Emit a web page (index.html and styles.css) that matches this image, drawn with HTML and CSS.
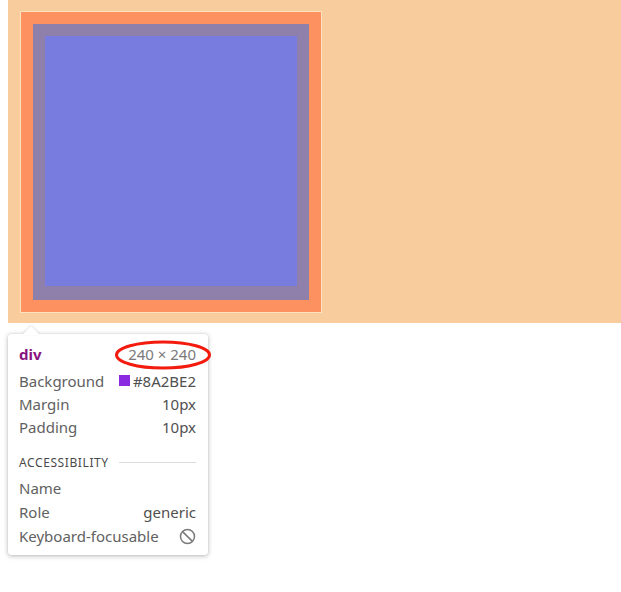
FILE: index.html
```html
<!DOCTYPE html>
<html>
<head>
<meta charset="utf-8">
<link rel="stylesheet" href="styles.css">
</head>
<body>
<div class="page">
  <div class="margin-box">
    <div class="padding-box">
      <div class="content-box"></div>
    </div>
  </div>
</div>

<div class="tooltip">
  <div class="arrow"></div>
  <div class="row head">
    <span class="tag">div</span>
    <span class="size">240 × 240</span>
  </div>
  <div class="row">
    <span class="label">Background</span>
    <span class="value"><i class="swatch"></i>#8A2BE2</span>
  </div>
  <div class="row">
    <span class="label">Margin</span>
    <span class="value">10px</span>
  </div>
  <div class="row">
    <span class="label">Padding</span>
    <span class="value">10px</span>
  </div>
  <div class="section">
    <span class="section-title">ACCESSIBILITY</span>
    <span class="section-line"></span>
  </div>
  <div class="row a11y">
    <span class="label">Name</span>
    <span class="value"></span>
  </div>
  <div class="row a11y">
    <span class="label">Role</span>
    <span class="value">generic</span>
  </div>
  <div class="row a11y">
    <span class="label">Keyboard-focusable</span>
    <span class="value">
      <svg class="no-icon" width="17" height="17" viewBox="0 0 17 17">
        <circle cx="8.5" cy="8.5" r="7" fill="none" stroke="#7a7a7a" stroke-width="1.5"/>
        <line x1="3.6" y1="3.6" x2="13.4" y2="13.4" stroke="#7a7a7a" stroke-width="1.5"/>
      </svg>
    </span>
  </div>
</div>

<svg class="annotation" width="100" height="32" viewBox="0 0 100 32">
  <ellipse cx="50" cy="16" rx="46.5" ry="13" fill="none" stroke="#f21b0e" stroke-width="3"/>
</svg>
</body>
</html>
```
FILE: styles.css
```css
html, body {
  background: #ffffff;
}
body {
  margin: 0 0 0 8px;
  font-family: "Noto Sans", "Open Sans", sans-serif;
}
.page {
  height: 323px;
  background: #f8cc9d;
  padding: 12px 0 0 13px;
  box-sizing: border-box;
}
.margin-box {
  width: 300px;
  height: 300px;
  background: #fe9160;
  outline: 1px solid #fde2c0;
  padding: 12px;
  box-sizing: border-box;
}
.padding-box {
  width: 276px;
  height: 276px;
  background: #8e80aa;
  padding: 12px;
  box-sizing: border-box;
}
.content-box {
  width: 252px;
  height: 250px;
  background: #787cde;
}
.tooltip {
  position: absolute;
  left: 8px;
  top: 334px;
  width: 200px;
  height: 221px;
  box-sizing: border-box;
  padding: 8px 12px 6px 11px;
  background: #ffffff;
  border-radius: 3px;
  box-shadow: 0 1px 5px rgba(0, 0, 0, 0.28), 0 0 1px rgba(0, 0, 0, 0.2);
  font-size: 15px;
  color: #5c5c5c;
}
.arrow {
  position: absolute;
  left: 14px;
  top: -8px;
  width: 0;
  height: 0;
  border-left: 9px solid transparent;
  border-right: 9px solid transparent;
  border-bottom: 9px solid #ffffff;
  filter: drop-shadow(0 -1px 1px rgba(0, 0, 0, 0.12));
}
.row {
  display: flex;
  justify-content: space-between;
  align-items: center;
  height: 23px;
}
.row.head {
  margin-bottom: 4px;
}
.row.a11y {
  height: 24px;
}
.tag {
  color: #881280;
  font-weight: 700;
}
.size {
  color: #7a7a7a;
}
.label {
  color: #616161;
}
.value {
  color: #505050;
  display: flex;
  align-items: center;
}
.swatch {
  display: inline-block;
  width: 11px;
  height: 11px;
  background: #8a2be2;
  margin-right: 3px;
}
.section {
  display: flex;
  align-items: center;
  height: 24px;
  margin-top: 12px;
  margin-bottom: 2px;
}
.section-title {
  font-size: 12px;
  letter-spacing: 0.6px;
  color: #4a4a4a;
}
.section-line {
  flex: 1;
  height: 1px;
  background: #dcdcdc;
  margin-left: 10px;
}
.no-icon {
  display: block;
}
.annotation {
  position: absolute;
  left: 113px;
  top: 339px;
}
```
